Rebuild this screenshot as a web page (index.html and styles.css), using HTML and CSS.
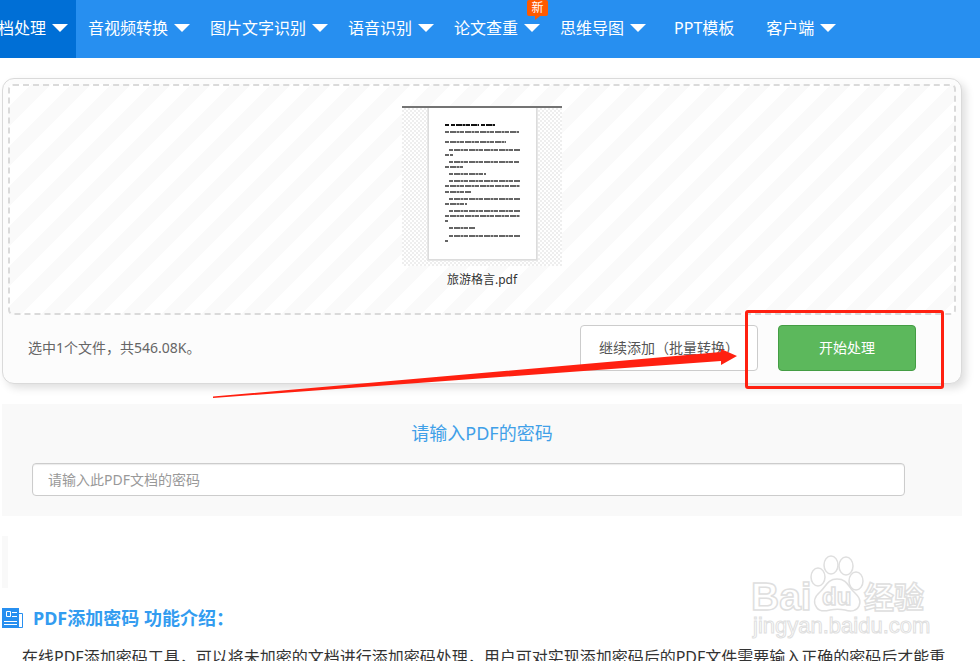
FILE: index.html
```html
<!DOCTYPE html>
<html lang="zh-CN">
<head>
    <meta charset="UTF-8">
    <meta name="viewport" content="width=device-width, initial-scale=1.0">
    <title>PDF添加密码</title>
    <link rel="stylesheet" href="styles.css">
</head>
<body>
    <nav class="navbar">
        <a class="nav-item active" href="#">文档处理<span class="caret"></span></a>
        <a class="nav-item" href="#">音视频转换<span class="caret"></span></a>
        <a class="nav-item" href="#">图片文字识别<span class="caret"></span></a>
        <a class="nav-item" href="#">语音识别<span class="caret"></span></a>
        <a class="nav-item" href="#">论文查重<span class="caret"></span><span class="badge-new">新</span></a>
        <a class="nav-item" href="#">思维导图<span class="caret"></span></a>
        <a class="nav-item plain" href="#">PPT模板</a>
        <a class="nav-item" href="#">客户端<span class="caret"></span></a>
    </nav>

    <main class="container">
        <!-- 上传区域 -->
        <section class="uploader">
            <div class="queue">
                <figure class="file">
                    <svg class="thumb" width="160" height="160" viewBox="0 0 160 160" aria-hidden="true">
                        <defs>
                            <pattern id="checker" width="4" height="4" patternUnits="userSpaceOnUse">
                                <rect width="4" height="4" fill="#fff"/>
                                <path d="M0 0h2v2H0zM2 2h2v2H2z" fill="#eee"/>
                            </pattern>
                        </defs>
                        <rect width="160" height="160" fill="url(#checker)"/>
                        <rect x="25" y="0" width="111" height="155" fill="#e6e6e6"/>
                        <rect x="26" y="0" width="109" height="154" fill="#dcdcdc"/>
                        <rect x="27" y="0" width="107" height="153" fill="#fff"/>
                        <rect width="160" height="2" fill="#747474"/>
                        <g fill="none" stroke="#333" stroke-width="1" stroke-dasharray="4 1 6 .5 3 .5">
                            <path stroke-width="2" stroke="#111" d="M43 19h4M49 19h28M79 19h14"/>
                            <path stroke-width="1.3" d="M43 26h74M43 36h61M47 44h71M43 49h8M47 56h70M43 61h18M47 68h37M47 75h71M43 80h75M43 86h26M47 93h71M43 98h22M47 105h71M43 110h75M43 115h3M47 122h26M47 130h71M43 135h3"/>
                        </g>
                    </svg>
                    <figcaption>旅游格言.pdf</figcaption>
                </figure>
            </div>
            <div class="status-bar">
                <p class="info">选中1个文件，共546.08K。</p>
                <button class="btn btn-add" type="button">继续添加（批量转换）</button>
                <button class="btn btn-start" type="button">开始处理</button>
            </div>
            <div class="mark"></div>
            <svg class="arrow" width="526" height="50" viewBox="0 0 526 50" aria-hidden="true">
                <path d="M1 48.500L509 4V1L525 8L509 17V13L1 50Z" fill="#ff2010"/>
            </svg>
        </section>

        <!-- 密码设置 -->
        <section class="password">
            <label for="pdfPassword">请输入PDF的密码</label>
            <input type="text" id="pdfPassword" placeholder="请输入此PDF文档的密码">
        </section>

        <div class="ad-slot"></div>

        <!-- 功能介绍 -->
        <section class="intro">
            <h2>
                <svg width="21" height="20" viewBox="0 0 21 20" aria-hidden="true">
                    <path d="M0 0h17v20H0z" fill="#278ff0"/>
                    <path d="M17 5.500h3.500v14H17" fill="none" stroke="#278ff0"/>
                    <path d="M4.500 3.500h4v5h-4zM10 4.500h5M10 8.500h5M2 13.500h13M2 16.500h13" fill="none" stroke="#fff"/>
                </svg>
                PDF添加密码 功能介绍：
            </h2>
            <p>在线PDF添加密码工具，可以将未加密的文档进行添加密码处理，用户可对实现添加密码后的PDF文件需要输入正确的密码后才能重</p>
        </section>
    </main>

    <div class="watermark">
        <svg width="180" height="90" viewBox="0 0 180 90" aria-hidden="true">
            <g fill="#fff" stroke="#dcdcdc" stroke-width="1.500">
                <text class="wm-big" x="1" y="57">Bai</text>
                <ellipse cx="81" cy="12" rx="7" ry="9"/>
                <ellipse cx="96" cy="13" rx="7" ry="9"/>
                <ellipse cx="68" cy="24" rx="7" ry="9"/>
                <ellipse cx="106" cy="28" rx="7" ry="9"/>
                <path d="M87 26C77 26 76 34 70 39C64 44 63 50 67 55C70 59 76 58 80 57C85 56 90 56 95 57C101 59 107 58 109 53C112 46 107 42 103 38C98 33 97 26 87 26Z"/>
                <text class="wm-du" x="72" y="52">du</text>
                <text class="wm-cjk" x="114" y="55">经验</text>
                <text class="wm-url" x="3" y="80">jingyan.baidu.com</text>
            </g>
        </svg>
    </div>
</body>
</html>
```

FILE: styles.css
```css
* {
    box-sizing: border-box;
}

body {
    margin: 0;
    font-family: "Noto Sans", "Noto Sans CJK SC", sans-serif;
    font-size: 14px;
    color: #333;
    background: #fff;
    height: 100vh;
    overflow: hidden;
    position: relative;
}

.navbar {
    display: flex;
    height: 58px;
    margin-left: -30px;
    background: #278ff0;
}

.nav-item {
    position: relative;
    display: flex;
    align-items: center;
    gap: 6px;
    padding: 0 8px 4px 12px;
    font-size: 16px;
    color: #fff;
    white-space: nowrap;
    text-decoration: none;
}

.nav-item.active {
    background: #006fd6;
}

.nav-item.plain {
    padding: 0 20px 4px;
}

.caret {
    margin-top: 2px;
    border: 8px solid transparent;
    border-top-color: #fff;
    border-bottom: 0;
}

.badge-new {
    position: absolute;
    top: 0;
    right: 0;
    width: 21px;
    height: 16px;
    border-radius: 2px;
    background: #ff5a00;
    font-size: 12px;
    line-height: 16px;
    text-align: center;
}

.badge-new::after {
    content: "";
    position: absolute;
    left: 8px;
    top: 16px;
    border-top: 4px solid #ff5a00;
    border-right: 5px solid transparent;
}

.container {
    margin: 20px 18px 0 2px;
}

.uploader {
    position: relative;
    padding: 5px;
    border: 1px solid #dadada;
    border-radius: 12px;
    background: #fcfcfc;
    box-shadow: 4px 4px 8px rgba(0, 0, 0, 0.13);
}

.queue {
    padding: 20px 0 23px;
    border: 2px dashed #dadada;
    border-radius: 5px;
    background: linear-gradient(135deg, #fff 25%, #fafafa 25%, #fafafa 50%, #fff 50%, #fff 75%, #fafafa 75%) 0 0 / 40px 40px;
}

.file {
    width: 160px;
    margin: 0 auto;
    text-align: center;
}

.thumb {
    display: block;
}

.file figcaption {
    margin-top: 4px;
    font-size: 12px;
    line-height: 20px;
}

.status-bar {
    display: flex;
    align-items: center;
    gap: 20px;
    padding: 10px 40px 7px 20px;
}

.info {
    flex: 1;
    margin: 0;
    padding-bottom: 2px;
    color: #666;
}

.btn {
    height: 46px;
    padding: 0 18px 2px;
    border: 1px solid #ccc;
    border-radius: 4px;
    background: #fff;
    font-family: inherit;
    font-size: 14px;
    color: #555;
}

.btn-add {
    width: 178px;
    text-align: left;
    white-space: nowrap;
}

.btn-start {
    width: 138px;
    border-color: #449d44;
    background: #5cb85c;
    color: #fff;
}

/* 红框标注 */
.mark {
    position: absolute;
    right: 17px;
    bottom: -6px;
    width: 199px;
    height: 79px;
    border: 3px solid #ff2010;
    border-radius: 3px;
}

.arrow {
    position: absolute;
    right: 223px;
    bottom: -15px;
}

.password {
    margin-top: 20px;
    padding: 17px 57px 20px 30px;
    background: #f9f9f9;
}

.password label {
    display: block;
    margin: 0 -27px 17px 0;
    font-size: 18px;
    line-height: 25px;
    text-align: center;
    color: #40a0e8;
}

.password input {
    display: block;
    width: 100%;
    height: 33px;
    padding: 0 15px;
    border: 1px solid #ccc;
    border-radius: 4px;
    font-family: inherit;
    font-size: 14px;
    box-shadow: inset 0 1px 1px rgba(0, 0, 0, 0.08);
}

.password input::placeholder {
    color: #999;
}

.ad-slot {
    width: 6px;
    height: 52px;
    margin-top: 20px;
    background: #f9f9f9;
}

.intro h2 {
    display: flex;
    align-items: center;
    gap: 10px;
    margin: 17px 0 14px;
    font-size: 18px;
    line-height: 26px;
    color: #339cf0;
}

.intro p {
    margin: 0 0 0 20px;
    font-size: 16px;
    line-height: 24px;
    white-space: nowrap;
}

.watermark {
    position: absolute;
    right: 50px;
    bottom: 18px;
    width: 180px;
    height: 90px;
    font-family: "Liberation Sans", "Noto Sans CJK SC", sans-serif;
    opacity: 0.9;
}

.wm-big {
    font-size: 39px;
    font-weight: bold;
}

.wm-du {
    font-size: 24px;
    font-weight: bold;
}

.wm-cjk {
    font-size: 30px;
    font-weight: bold;
}

.wm-url {
    font-size: 22px;
    stroke-width: 1px;
}
```
